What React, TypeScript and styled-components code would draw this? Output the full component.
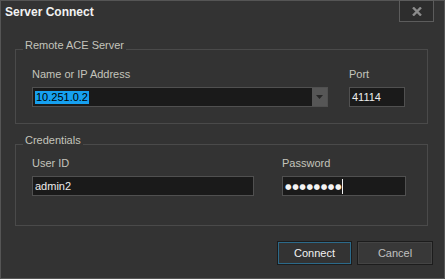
import React from "react";
import styled, { createGlobalStyle } from "styled-components";

const GlobalStyle = createGlobalStyle`
  body {
    margin: 0;
    background: #333333;
    font-family: "Liberation Sans", Arial, sans-serif;
  }
`;

const Window = styled.div`
  box-sizing: border-box;
  width: 445px;
  height: 279px;
  border: 1px solid #555555;
  background: #333333;
  display: flex;
  flex-direction: column;
`;

const TitleBar = styled.div`
  display: flex;
  justify-content: space-between;
  align-items: flex-start;
  height: 21px;
  padding: 0 10px 0 4px;
`;

const Title = styled.div`
  font-size: 12px;
  font-weight: bold;
  line-height: 15px;
  padding-top: 4px;
  color: #f2f2f2;
`;

const CloseButton = styled.div`
  box-sizing: border-box;
  width: 35px;
  height: 22px;
  margin-top: -1px;
  border: 1px solid #5c5c5c;
  background: #2d2d2d;
  display: flex;
  align-items: center;
  justify-content: center;
`;

const Content = styled.div`
  display: flex;
  flex-direction: column;
  padding: 0 16px 0 14px;
`;

const Group = styled.fieldset<{ $top: number }>`
  margin: ${(p) => p.$top}px 0 0 0;
  padding: 0 0 0 7px;
  border: 1px solid #4a4a4a;
  min-width: 0;
`;

const Legend = styled.legend`
  padding: 0 2px 8px 2px;
  font-size: 11px;
  line-height: 14px;
  color: #c4c4bc;
`;

const Row = styled.div<{ $top: number; $bottom: number; $gap: number }>`
  display: flex;
  align-items: flex-start;
  gap: ${(p) => p.$gap}px;
  padding: ${(p) => p.$top}px 0 ${(p) => p.$bottom}px 9px;
`;

const Field = styled.div`
  display: flex;
  flex-direction: column;
  gap: 6px;
`;

const Label = styled.div`
  font-size: 11px;
  line-height: 14px;
  color: #c4c4bc;
`;

const TextBox = styled.div<{ $width: number }>`
  box-sizing: border-box;
  width: ${(p) => p.$width}px;
  height: 20px;
  border: 1px solid #505050;
  background: #1a1a1a;
  display: flex;
  align-items: center;
  padding-left: 2px;
  font-size: 11px;
  color: #ececec;
`;

const Combo = styled(TextBox)`
  justify-content: space-between;
  padding-right: 0;
`;

const Selected = styled.span`
  background: #16a0f0;
  color: #000000;
  line-height: 13px;
  padding: 0 1px;
`;

const DropButton = styled.div`
  width: 15px;
  height: 18px;
  background: #565656;
  display: flex;
  align-items: center;
  justify-content: center;
`;

const Dots = styled.span`
  font-family: "DejaVu Sans", sans-serif;
  font-size: 7.5px;
  letter-spacing: 0.6px;
  color: #f4f4f4;
`;

const Caret = styled.span`
  width: 1px;
  height: 15px;
  background: #f0f0f0;
`;

const ButtonRow = styled.div`
  display: flex;
  justify-content: flex-end;
  gap: 5px;
  margin-top: 15px;
  padding-right: 11px;
`;

const Button = styled.div<{ $primary?: boolean }>`
  box-sizing: border-box;
  width: ${(p) => (p.$primary ? 75 : 76)}px;
  height: 24px;
  border: 1px solid #1c1c1c;
  box-shadow: inset 0 0 0 1px ${(p) => (p.$primary ? "#2c6a8a" : "#444444")};
  background: ${(p) => (p.$primary ? "#333333" : "#383838")};
  display: flex;
  align-items: center;
  justify-content: center;
  font-size: 11px;
  color: ${(p) => (p.$primary ? "#f2f2f2" : "#c0c0c0")};
`;

const App = () => {
  return (
    <>
      <GlobalStyle />
      <Window>
        <TitleBar>
          <Title>Server Connect</Title>
          <CloseButton>
            <svg width="10" height="9" viewBox="0 0 10 9">
              <path d="M1 0.5 L9 8.5 M9 0.5 L1 8.5" stroke="#8c8c8c" strokeWidth="2.4" />
            </svg>
          </CloseButton>
        </TitleBar>
        <Content>
          <Group $top={16}>
            <Legend>Remote ACE Server</Legend>
            <Row $top={7} $bottom={16} $gap={21}>
              <Field>
                <Label>Name or IP Address</Label>
                <Combo $width={296}>
                  <Selected>10.251.0.2</Selected>
                  <DropButton>
                    <svg width="7" height="4" viewBox="0 0 7 4">
                      <path d="M0 0 H7 L3.5 4 Z" fill="#262626" />
                    </svg>
                  </DropButton>
                </Combo>
              </Field>
              <Field>
                <Label>Port</Label>
                <TextBox $width={56}>41114</TextBox>
              </Field>
            </Row>
          </Group>
          <Group $top={9}>
            <Legend>Credentials</Legend>
            <Row $top={1} $bottom={29} $gap={28}>
              <Field>
                <Label>User ID</Label>
                <TextBox $width={222}>admin2</TextBox>
              </Field>
              <Field>
                <Label>Password</Label>
                <TextBox $width={124}>
                  <Dots>●●●●●●●●</Dots>
                  <Caret />
                </TextBox>
              </Field>
            </Row>
          </Group>
        </Content>
        <ButtonRow>
          <Button $primary>Connect</Button>
          <Button>Cancel</Button>
        </ButtonRow>
      </Window>
    </>
  );
};

export default App;
